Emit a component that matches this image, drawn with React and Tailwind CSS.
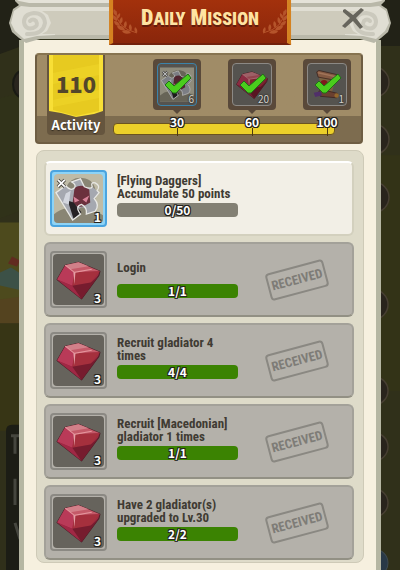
const missions = [
  { id: 1, title: "[Flying Daggers] Accumulate 50 points", done: 0, goal: 50, reward: 1, kind: "shard" },
  { id: 2, title: "Login", done: 1, goal: 1, reward: 3, kind: "gem" },
  { id: 3, title: "Recruit gladiator 4 times", done: 4, goal: 4, reward: 3, kind: "gem" },
  { id: 4, title: "Recruit [Macedonian] gladiator 1 times", done: 1, goal: 1, reward: 3, kind: "gem" },
  { id: 5, title: "Have 2 gladiator(s) upgraded to Lv.30", done: 2, goal: 2, reward: 3, kind: "gem" },
];

const milestones = [
  { points: 30, amount: 6, kind: "shard" },
  { points: 60, amount: 20, kind: "gem" },
  { points: 100, amount: 1, kind: "scroll" },
];

const outline =
  "text-white [text-shadow:-1px_-1px_0_#26241e,1px_-1px_0_#26241e,-1px_1px_0_#26241e,1px_1px_0_#26241e,0_1px_0_#26241e,0_-1px_0_#26241e]";

const Gem = () => (
  <svg viewBox="0 0 46 46" className="h-full w-full" aria-hidden="true">
    <path d="M2 23 10 9 23 6 44 15 43 19 26 42Z" fill="#9c2940" stroke="#4e2029" strokeWidth="1" strokeLinejoin="round" />
    <path d="M2 23 10 9 19 16 17 29Z" fill="#b93a58" />
    <path d="M10 9 23 6 44 15 19 16Z" fill="#c45a68" />
    <path d="M10 9 23 6 33 10 15 13Z" fill="#d28089" />
    <path d="M19 16 44 15 35 26 17 29Z" fill="#a5303d" />
    <path d="M2 23 17 29 26 42Z" fill="#a02845" />
    <path d="M17 29 35 26 43 19 26 42Z" fill="#761c2e" />
    <path d="M10 9 19 16 36 13" fill="none" stroke="#e5959c" strokeWidth="1" />
    <path d="M18 16H20L19 28Z" fill="#e5a0a5" />
  </svg>
);

const Shard = () => (
  <svg viewBox="0 0 50 50" className="h-full w-full" aria-hidden="true">
    <path d="M0 0H50V50H0Z" fill="#bfbba6" />
    <path d="M0 50V41Q6 36 13 35L12 14Q17 3 29 4Q42 5 43 21L40 36L50 42V50Z" fill="#898574" />
    <path d="M2 19 12 12Q17 18 21 14Q23 11 18 8L27 5 31 13Q38 16 39 13L46 19 41 25Q47 32 42 38L33 41Q34 34 28 34Q23 36 27 41L19 47Z" fill="#a5a8b0" />
    <path d="M21 14Q29 9 36 16L37 29 30 33Q24 35 19 29Z" fill="#6b303d" />
    <path d="M14 27 20 29 28 39 20 46Z" fill="#262225" />
    <path d="M20 23 26 27 21 29ZM29 26 36 22 33 29Z" fill="#d78298" />
    <path d="M12 20 17 17 15 31 9 29Z" fill="#d3d6de" />
    <path d="M2 19 12 12Q17 18 21 14Q23 11 18 8L27 5 31 13Q38 16 39 13Q37 8 42 9Q48 12 44 17L46 19 41 25Q47 32 42 38L33 41Q34 34 28 31Q21 33 27 41L19 47Z" fill="none" stroke="#e8e8e5" strokeWidth="1.3" />
    <path d="M4 6 11 13M11 6 4 13" stroke="#403e3a" strokeWidth="3.5" />
    <path d="M4 6 11 13M11 6 4 13" stroke="#fff" strokeWidth="1.8" />
  </svg>
);

const Scroll = () => (
  <svg viewBox="0 0 46 46" className="h-full w-full" aria-hidden="true">
    <path d="M12 12 34 17 29 37 15 31Z" fill="#a18157" />
    <path d="M9 6 12 4 38 10 41 14 38 18 11 13Z" fill="#b07858" stroke="#492a23" />
    <path d="M11 7 37 13" stroke="#d79a76" strokeWidth="2" />
    <path d="M12 32 17 30 37 35 36 41 14 39Z" fill="#8d5540" stroke="#492a23" />
    <circle cx="19" cy="22" r="5" fill="#a82424" />
    <path d="M5 34 15 32 16 38 7 40Z" fill="#6b3f8c" />
    <circle cx="36" cy="38" r="3" fill="#c58a3a" />
  </svg>
);

const Check = () => (
  <svg viewBox="0 0 28 22" className="absolute left-1.5 top-2 h-6 w-7" aria-hidden="true">
    <path d="M1 12 5 8 10 13 24 1 27 5 12 20 9 20Z" fill="#4acd1d" stroke="#216f19" strokeWidth="1" strokeLinejoin="round" />
  </svg>
);

const Reward = ({ kind }) => {
  if (kind === "shard") return <Shard />;
  if (kind === "scroll") return <Scroll />;
  return <Gem />;
};

const Backdrop = () => (
  <svg viewBox="0 0 400 570" preserveAspectRatio="none" className="absolute inset-0 h-full w-full" aria-hidden="true">
    <path d="M0 0H400V570H0Z" fill="#30301a" />
    <path d="M0 0H22V46L0 54ZM380 0H400V46H380Z" fill="#222217" />
    <path d="M0 98 22 92V210L0 218Z" fill="#303219" />
    <path d="M0 222H22V300H0Z" fill="#4d4a1d" />
    <path d="M0 272 11 267 22 274V290L0 285Z" fill="#3c5147" />
    <path d="M8 263 12 256 20 260 17 266Z" fill="#612b20" />
    <path d="M0 299 22 296V323H0Z" fill="#54431f" />
    <path d="M0 323H22V430H0Z" fill="#373515" />
    <path d="M6 430Q6 424 12 424H22V570H6Z" fill="#1c1d15" />
    <path d="M11 435H22M15 436V453M15 478V504M15 522 20 538" stroke="#45463e" strokeWidth="3" />
    <ellipse cx="22" cy="84" rx="9" ry="13" fill="#29251e" stroke="#191a14" strokeWidth="2" />
    <path d="M378 155H400V390H378Z" fill="#333317" />
    <g fill="#29241c" stroke="#473f32" strokeWidth="1.5">
      <circle cx="374" cy="82" r="15" />
      <circle cx="374" cy="139" r="15" />
      <circle cx="374" cy="197" r="15" />
      <circle cx="373" cy="304" r="15" />
      <circle cx="374" cy="390" r="14" />
      <circle cx="374" cy="446" r="14" />
      <circle cx="374" cy="502" r="14" />
    </g>
    <circle cx="374" cy="562" r="14" fill="#293947" stroke="#3e4a50" />
  </svg>
);

const Volute = ({ className }) => (
  <svg viewBox="0 0 46 45" className={`h-[45px] w-[46px] shrink-0 ${className}`} aria-hidden="true">
    <path d="M6 0H46V39H31L17 43 10 38 3 32 0 23 4 9 10 5 6 1Z" fill="#b9b8a9" />
    <path d="M8 0H46V3H20L10 1Z" fill="#e4e2d8" />
    <path d="M46 7H21L12 6 5 11 2 23 6 31 15 39 28 36 46 35Z" fill="#e0ded3" />
    <path d="M46 11H33L39 15 42 23 38 31 33 34H46Z" fill="#cecbbc" />
    <path d="M18 34Q34 35 36 23Q35 13 25 13Q15 14 15 22Q16 30 24 28Q30 26 27 21Q24 18 21 21" fill="none" stroke="#cbc9bd" strokeWidth="4" strokeLinecap="round" />
  </svg>
);

const Laurel = ({ className }) => (
  <svg viewBox="0 0 26 28" className={`h-7 w-[26px] shrink-0 ${className}`} aria-hidden="true">
    <path d="M3 3Q3 20 24 25" fill="none" stroke="#b5542b" strokeWidth="1" />
    <g fill="#b5542b">
      <path d="M3 8Q-1 5 1 1Q5 4 3 8ZM4 13Q-1 12 0 7Q5 9 4 13ZM7 18Q1 18 1 13Q6 13 7 18ZM12 22Q5 23 4 18Q10 17 12 22ZM18 25Q11 27 9 23Q15 20 18 25Z" />
      <path d="M4 11Q8 9 7 5Q3 7 4 11ZM7 16Q11 14 9 9Q5 12 7 16ZM12 20Q15 17 13 13Q9 16 12 20ZM18 23Q20 19 17 16Q14 20 18 23ZM24 25Q25 21 22 19Q20 23 24 25Z" />
    </g>
  </svg>
);

const Header = () => (
  <header className="relative z-10 mx-[9px] flex h-10 items-start">
    <Volute className="" />
    <div className="h-[39px] flex-1 border-b-4 border-[#b9b8a9] bg-[#cecbbc]">
      <div className="h-[3px] bg-[#e4e2d8]" />
      <div className="h-1 bg-[#b9b8a9]" />
      <div className="h-1 bg-[#e0ded3]" />
    </div>
    <Volute className="-scale-x-100" />
    <div className="absolute left-1/2 top-0 flex h-[45px] -translate-x-1/2 items-center justify-center gap-0.5 border-x-4 border-b-2 border-x-[#d58220] border-b-[#72200c] bg-gradient-to-b from-[#a3310c] to-[#8a260b]">
      <Laurel className="" />
      <h1 className="whitespace-nowrap pb-1.5 font-['Roboto_Condensed','Noto_Sans_CJK_SC',sans-serif] text-[22px] font-black leading-7 text-[#ffe3a2] [text-shadow:0_2px_0_#621b0b]">
        D<span className="text-lg">AILY</span> M<span className="text-lg">ISSION</span>
      </h1>
      <Laurel className="-scale-x-100" />
    </div>
    <button type="button" aria-label="Close" className="absolute right-[26px] top-[7px] h-6 w-6">
      <svg viewBox="0 0 24 24" className="h-full w-full">
        <path d="M2 3 4 2 12 8 20 1 23 3 15 11 22 20 19 22 12 14 4 21 1 19 9 11 2 5Z" fill="#67655c" />
      </svg>
    </button>
  </header>
);

const Activity = () => (
  <section className="ml-[11px] mr-[13px] mt-3 flex h-[91px] rounded border-2 border-[#6e5d42] border-t-[#877450] bg-linear-to-b from-[#a08c67] from-70% to-[#7d6c4f] to-70% pl-[10px]">
    <div className="relative flex h-20 w-[58px] shrink-0 flex-col items-center rounded-b bg-[#65553e]">
      <svg viewBox="0 0 54 62" className="h-[62px] w-[54px]" aria-hidden="true">
        <path d="M0 0H54V56L45 59 27 62 12 58 0 56Z" fill="#f8df36" />
        <path d="M4 0H50V56L27 61 12 57 4 55Z" fill="#e7ca20" />
        <path d="M4 18 50 9V20L4 29ZM4 45 50 35V43L4 52Z" fill="#f0d529" opacity=".6" />
      </svg>
      <strong className="absolute inset-x-0 top-3 text-center font-['Noto_Sans_CJK_SC',sans-serif] text-[22px] font-black leading-8 text-[#53462b]">110</strong>
      <span className="text-[13px] font-bold leading-4 text-white [text-shadow:0_1px_1px_#332b20]">Activity</span>
    </div>
    <div className="min-w-0 flex-1 pl-2 pr-[10px] pt-1">
      <ul className="relative z-10 flex justify-end gap-[27px]">
        {milestones.map((m) => (
          <li key={m.points} className="flex w-12 flex-col items-center">
            <div className="h-[51px] w-12 rounded bg-[#59493a] p-1">
              <div className={`relative h-full w-full rounded-sm border bg-[#55534f] p-0.5 ${m.kind === "shard" ? "border-[#3c83aa]" : "border-[#8c8985]"}`}>
                <div className="h-full w-full brightness-75">
                  <Reward kind={m.kind} />
                </div>
                <Check />
                <span className="absolute bottom-0 right-0.5 text-[10px] leading-3 text-[#d5d2cc] [text-shadow:0_0_2px_#000]">{m.amount}</span>
              </div>
            </div>
            <svg viewBox="0 0 8 4" className="h-1 w-2" aria-hidden="true">
              <path d="M0 0H8L4 4Z" fill="#59493a" />
            </svg>
            <span className={`text-xs font-bold leading-4 ${outline}`}>{m.points}</span>
            <span className="-mt-0.5 h-2 w-px bg-[#4d3b12]" />
          </li>
        ))}
      </ul>
      <div className="-mt-[13px] mr-4 h-3 rounded-sm border border-[#6b5420] bg-[#ecd02a]" role="progressbar" aria-label="Activity" aria-valuenow={110} aria-valuemax={100} />
    </div>
  </section>
);

const Mission = ({ mission }) => {
  const received = mission.done >= mission.goal;
  const shard = mission.kind === "shard";

  return (
    <li
      className={`flex h-[75px] items-center rounded-md border-2 pl-1 ${
        received
          ? "border-[#a3a199] border-b-[#929084] bg-[#b4b1aa]"
          : "border-[#d3d0be] border-t-white bg-[#f2efe6]"
      }`}
    >
      <div
        className={`relative h-[57px] w-[57px] shrink-0 rounded border-2 ${
          shard ? "border-[#4aa4df] bg-[#8ed3f5] p-0.5" : "border-[#8b8983] bg-[#b4b1aa] p-px"
        }`}
      >
        <div className={`h-full w-full overflow-hidden rounded-sm ${shard ? "" : "bg-[#66635c] p-0.5"}`}>
          <Reward kind={mission.kind} />
        </div>
        <span className={`absolute bottom-0 right-1 text-xs font-bold leading-4 ${outline}`}>{mission.reward}</span>
      </div>
      <div className="ml-[10px] w-[121px] shrink-0 pb-2">
        <h2 className="flex min-h-7 items-center font-['Roboto_Condensed','Roboto',sans-serif] text-[13px] font-bold leading-[13px] text-[#403b33]">
          {mission.title}
        </h2>
        <div
          role="progressbar"
          aria-label={mission.title}
          aria-valuenow={mission.done}
          aria-valuemax={mission.goal}
          className={`mt-0.5 h-[14px] rounded-sm text-center text-xs font-bold leading-[14px] ${outline} ${
            received ? "bg-[#3b8302]" : "bg-[#838074]"
          }`}
        >
          {mission.done}/{mission.goal}
        </div>
      </div>
      {received && (
        <div className="flex flex-1 justify-center pl-1">
          <span className="-rotate-[15deg] rounded border-2 border-[#8a8882] px-0.5 font-['Roboto_Condensed','Roboto',sans-serif] text-[13px] font-bold leading-6 text-[#7e7c77]">
            RECEIVED
          </span>
        </div>
      )}
    </li>
  );
};

const App = () => {
  return (
    <div className="relative flex min-h-screen flex-col overflow-hidden font-['Noto_Sans_CJK_SC',sans-serif]">
      <Backdrop />
      <Header />
      <main className="relative mx-[19px] flex-1 border-x-[5px] border-[#b5b6a2] bg-[#f6f0df] pb-2 pt-px">
        <Activity />
        <ul className="mx-3 mt-[6px] flex flex-col gap-[6px] rounded-lg border border-[#cecab7] bg-[#dedbc9] pb-0.5 pl-[7px] pr-[9px] pt-[10px]">
          {missions.map((mission) => (
            <Mission key={mission.id} mission={mission} />
          ))}
        </ul>
      </main>
    </div>
  );
};

export default App;
